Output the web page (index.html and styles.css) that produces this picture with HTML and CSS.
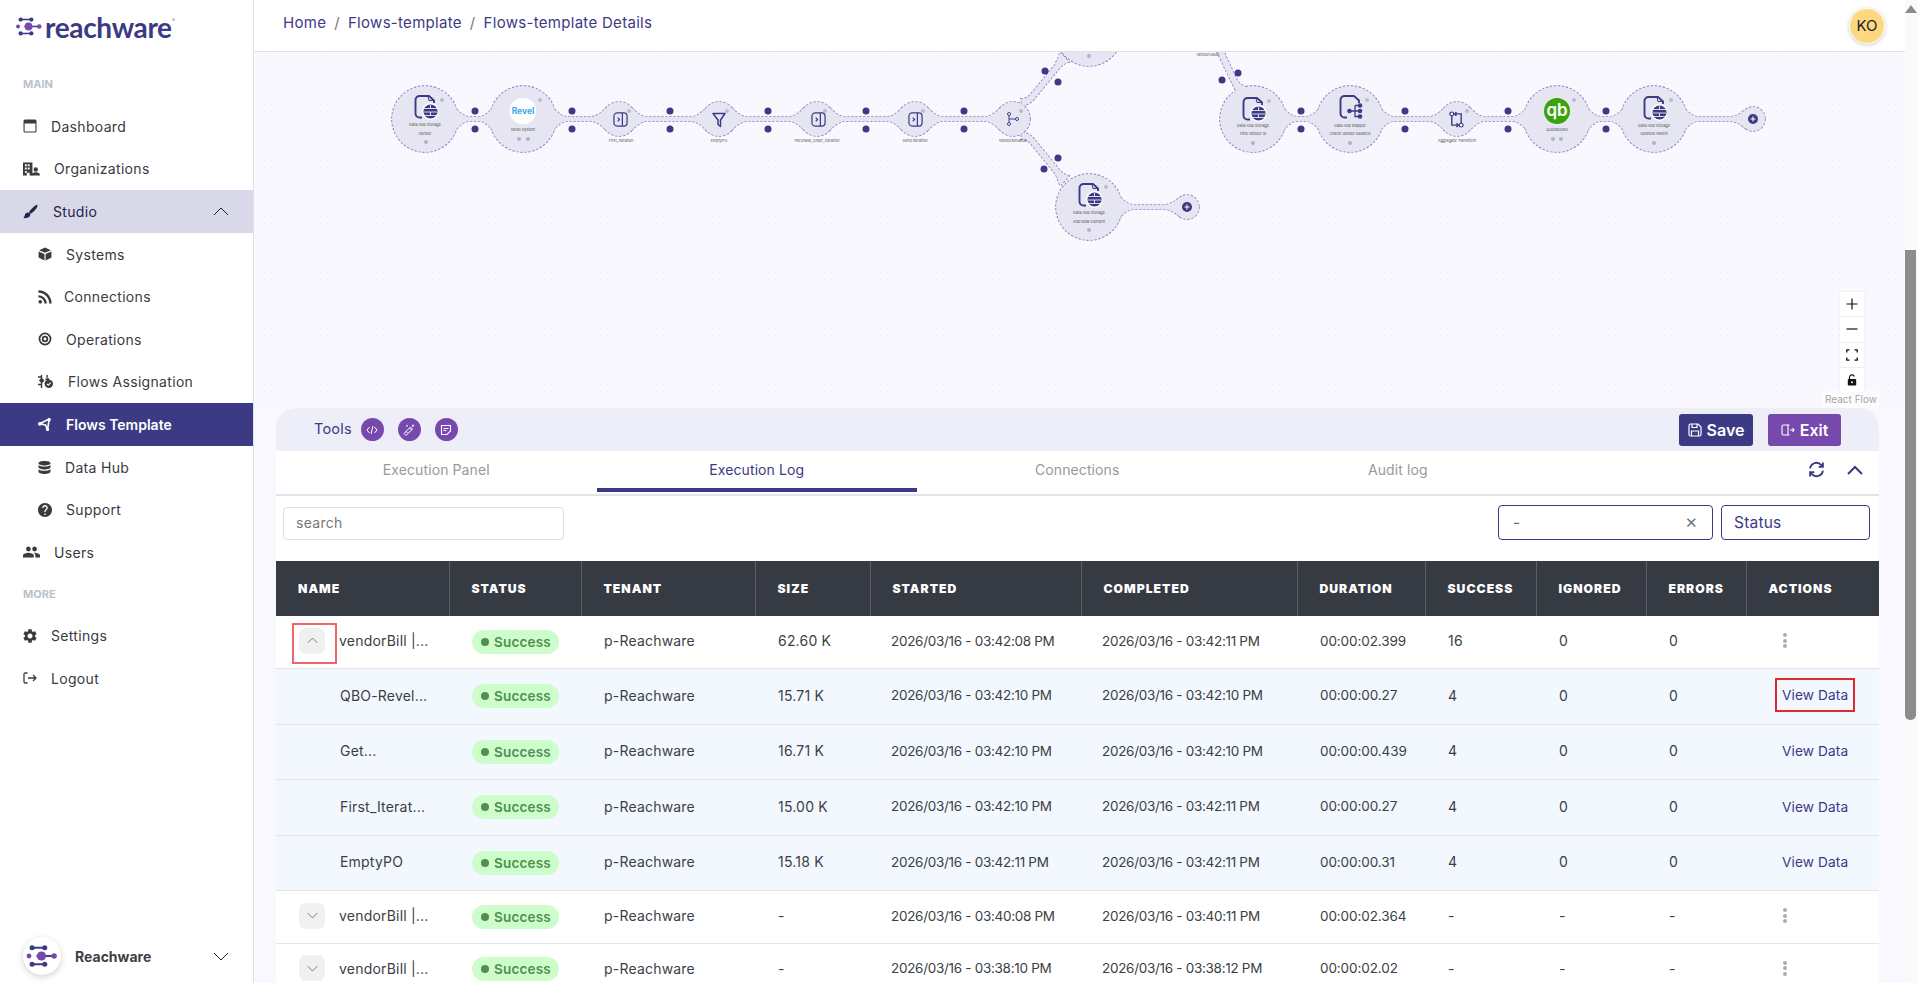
FILE: index.html
```html
<!DOCTYPE html>
<html lang="en">
<head>
<meta charset="utf-8">
<title>Flows-template Details</title>
<link rel="stylesheet" href="styles.css">
</head>
<body>
<svg class="defs" width="0" height="0" aria-hidden="true">
  <defs>
    <symbol id="i-dash" viewBox="0 0 14 14"><path d="M2 .5h10A1.5 1.5 0 0 1 13.500 2v10a1.500 1.500 0 0 1-1.500 1.500H2A1.500 1.500 0 0 1 .5 12V2A1.500 1.500 0 0 1 2 .5zM1.600 4.500V12c0 .2.2.4.4.4h10c.2 0 .4-.2.4-.4V4.500z" fill-rule="evenodd"/></symbol>
    <symbol id="i-org" viewBox="0 0 18 14"><path d="M0 0h10v14H7v-3H4v3H0zM2 2v2h2V2zm3 0v2h2V2zM2 5.500v2h2v-2zm3 0v2h2v-2zM2 9v2h2V9z" fill-rule="evenodd"/><circle cx="13.500" cy="7.500" r="2.300"/><path d="M9 14c0-2.500 2-3.500 4.500-3.500S18 11.500 18 14z"/></symbol>
    <symbol id="i-brush" viewBox="0 0 24 24"><path d="M8 13.500c-2.500 0-4.500 1.800-5 4.200C2.600 19.700 2 21 .5 22.500c3.500.5 8-.2 10-2.500 1.700-2 1.500-4.500.2-5.500zM23 1c-2 .3-5 2.200-9 6.500-2 2.100-3.500 3.900-4.500 5.200l2.800 2.800C16 13 19.600 9.500 21 7.500c1.500-2 2.500-5 2-6.500z"/></symbol>
    <symbol id="i-cube" viewBox="0 0 24 24"><path d="M12 1l10 4.500L12 10 2 5.500zM1 7.500l10 4.500v11L2.500 19 1 17.500zM23 7.500V18l-1.500 1L13 23V12z"/></symbol>
    <symbol id="i-rss" viewBox="3.500 4 16.500 16.500"><path d="M6.180 15.640a2.180 2.180 0 1 1 0 4.360 2.180 2.180 0 0 1 0-4.360zM4 4.440v2.830c7.030 0 12.730 5.700 12.730 12.730h2.830c0-8.590-6.970-15.560-15.560-15.560zm0 5.660v2.830c3.900 0 7.070 3.170 7.070 7.070h2.830c0-5.470-4.430-9.900-9.900-9.900z"/></symbol>
    <symbol id="i-target" viewBox="0 0 24 24"><path d="M12 1a11 11 0 1 0 0 22 11 11 0 0 0 0-22zm0 3a8 8 0 1 1 0 16 8 8 0 0 1 0-16zm0 2.500a5.500 5.500 0 1 0 0 11 5.500 5.500 0 0 0 0-11zm0 3a2.500 2.500 0 1 1 0 5 2.500 2.500 0 0 1 0-5z" fill-rule="evenodd"/></symbol>
    <symbol id="i-assign" viewBox="0 0 16 14"><path d="M3 0h1.500v3.500L7 6 4.500 8.500V14H3v-3H0V9.500h3V8L1 6l2-2.500V3H0V1.500h3zM9 0h1.500v3H9zM8 3.500h4v2H8z"/><circle cx="11.500" cy="9.500" r="4.500"/><path d="M9.500 9.500l1.500 1.500 2.500-2.800" fill="none" stroke="#fff" stroke-width="1.200"/></symbol>
    <symbol id="i-flow" viewBox="0 0 14 14"><path d="M1.800 6.200L12 1.200 10.300 12.500 8 7.500z" fill="none" stroke="currentColor" stroke-width="1.800"/><circle cx="2" cy="6.300" r="2"/><circle cx="12" cy="1.800" r="1.800"/><circle cx="10.300" cy="12.300" r="1.700"/></symbol>
    <symbol id="i-db" viewBox="0 0 12 13"><path d="M6 0c3.300 0 6 .9 6 2.200S9.300 4.400 6 4.400 0 3.500 0 2.200 2.700 0 6 0zM0 4c1.200 1 3.400 1.500 6 1.500S10.800 5 12 4v2.300c0 1.200-2.700 2.200-6 2.200S0 7.500 0 6.300zM0 8.200c1.200 1 3.400 1.500 6 1.500s4.800-.5 6-1.500v2.600C12 12 9.300 13 6 13s-6-1-6-2.200z"/></symbol>
    <symbol id="i-help" viewBox="2 2 20 20"><path d="M12 2C6.480 2 2 6.480 2 12s4.480 10 10 10 10-4.480 10-10S17.520 2 12 2zm1 17h-2v-2h2v2zm2.070-7.750l-.9.920C13.450 12.900 13 13.500 13 15h-2v-.5c0-1.100.45-2.100 1.170-2.830l1.240-1.260c.37-.36.59-.86.59-1.410 0-1.100-.9-2-2-2s-2 .9-2 2H8c0-2.210 1.790-4 4-4s4 1.790 4 4c0 .88-.36 1.680-.93 2.250z"/></symbol>
    <symbol id="i-users" viewBox="1 5 22 14"><path d="M16 11c1.660 0 2.990-1.340 2.990-3S17.660 5 16 5c-1.660 0-3 1.340-3 3s1.340 3 3 3zm-8 0c1.660 0 2.990-1.340 2.990-3S9.660 5 8 5C6.340 5 5 6.340 5 8s1.340 3 3 3zm0 2c-2.330 0-7 1.170-7 3.500V19h14v-2.500c0-2.330-4.670-3.500-7-3.500zm8 0c-.29 0-.62.020-.97.050 1.160.84 1.970 1.970 1.970 3.450V19h6v-2.500c0-2.330-4.670-3.500-7-3.500z"/></symbol>
    <symbol id="i-cog" viewBox="2.500 2 19 20"><path d="M19.140 12.940c.04-.3.060-.61.060-.94 0-.32-.02-.64-.07-.94l2.030-1.580c.18-.14.23-.41.12-.61l-1.920-3.320c-.12-.22-.37-.29-.59-.22l-2.390.96c-.5-.38-1.030-.7-1.620-.94l-.36-2.540c-.04-.24-.24-.41-.48-.41h-3.840c-.24 0-.43.17-.47.41l-.36 2.540c-.59.24-1.130.57-1.620.94l-2.390-.96c-.22-.08-.47 0-.59.22L2.740 8.870c-.12.21-.08.47.12.61l2.030 1.580c-.05.3-.09.63-.09.94s.02.64.07.94l-2.030 1.580c-.18.14-.23.41-.12.61l1.920 3.320c.12.22.37.29.59.22l2.390-.96c.5.38 1.030.7 1.620.94l.36 2.540c.05.24.24.41.48.41h3.840c.24 0 .44-.17.47-.41l.36-2.540c.59-.24 1.130-.56 1.620-.94l2.390.96c.22.08.47 0 .59-.22l1.920-3.320c.12-.22.07-.47-.12-.61l-2.010-1.580zM12 15.600c-1.980 0-3.600-1.620-3.600-3.600s1.620-3.600 3.600-3.600 3.600 1.620 3.600 3.600-1.620 3.600-3.600 3.600z"/></symbol>
    <symbol id="i-logout" viewBox="0 0 14 12"><path d="M4.500 1H2.200C1.500 1 1 1.500 1 2.200v7.600c0 .7.5 1.200 1.200 1.200h2.300M5 6h8M10 3l3 3-3 3" fill="none" stroke="currentColor" stroke-width="1.300"/></symbol>
    <symbol id="i-chev-up" viewBox="0 0 16 9"><path d="M1 8l7-7 7 7" fill="none" stroke="currentColor" stroke-width="1"/></symbol>
    <symbol id="i-chev-down" viewBox="0 0 16 9"><path d="M1 1l7 7 7-7" fill="none" stroke="currentColor" stroke-width="1"/></symbol>
    <symbol id="i-mark" viewBox="0 0 28 20">
      <path d="M5 2.500h12M5 17.500h12M9 10h14" stroke="#3d3a85" stroke-width="1.700" fill="none"/>
      <circle cx="5" cy="2.500" r="2.300" fill="#3d3a85"/><circle cx="16.500" cy="2.500" r="2.300" fill="#3d3a85"/>
      <circle cx="5" cy="17.500" r="2.300" fill="#3d3a85"/><circle cx="16.500" cy="17.500" r="2.300" fill="#3d3a85"/>
      <circle cx="2.200" cy="10" r="2.200" fill="#7849ad"/><circle cx="25" cy="10" r="2.500" fill="#7849ad"/>
      <circle cx="13.500" cy="10" r="4.200" fill="#7849ad"/>
    </symbol>
    <symbol id="n-store" viewBox="0 0 24 26">
      <path d="M8 22.500H5.500a4 4 0 0 1-4-4V5a4 4 0 0 1 4-4H15l5 4.500V8" fill="none" stroke="#3d3a85" stroke-width="1.900" stroke-linejoin="round"/>
      <path d="M14 1.500l1 4h5" fill="none" stroke="#3d3a85" stroke-width="1"/>
      <circle cx="16.500" cy="16.500" r="8.500" fill="#fff"/><circle cx="16.500" cy="16.500" r="7" fill="#3d3a85"/>
      <path d="M10 13.500h13M10 17h13M10 20.500h13M16.500 10v4M16.500 17v4" stroke="#fff" stroke-width=".8"/>
    </symbol>
    <symbol id="n-map" viewBox="0 0 24 26">
      <path d="M8 22.500H5.500a4 4 0 0 1-4-4V5a4 4 0 0 1 4-4H15l5 4.500V8" fill="none" stroke="#3d3a85" stroke-width="1.900" stroke-linejoin="round"/>
      <path d="M11 16h5M16 10.500v11h4M16 10.500h4M16 16h4" fill="none" stroke="#3d3a85" stroke-width="1.300"/>
      <circle cx="21" cy="10.500" r="2.300" fill="#3d3a85"/><circle cx="21" cy="16" r="2.300" fill="#3d3a85"/><circle cx="21" cy="21.500" r="2.300" fill="#3d3a85"/><circle cx="10.500" cy="16" r="2.300" fill="#3d3a85"/>
    </symbol>
    <symbol id="n-iter" viewBox="0 0 16 16">
      <rect x="1" y="1" width="14" height="14" rx="3.500" fill="none" stroke="#3d3a85" stroke-width="1.300"/>
      <path d="M10 1v14M5 6l2 2-2 2" fill="none" stroke="#3d3a85" stroke-width="1.300"/>
    </symbol>
    <symbol id="n-filter" viewBox="0 0 14 16"><path d="M1 1.500h12L8.500 8v6.500L6 12.500V8z" fill="none" stroke="#3d3a85" stroke-width="1.500" stroke-linejoin="round"/></symbol>
    <symbol id="n-branch" viewBox="0 0 14 14"><path d="M3 3v8M3 7h6.500M3 7" fill="none" stroke="#3d3a85" stroke-width="1"/><circle cx="3" cy="2" r="1.500" fill="#fff" stroke="#3d3a85"/><circle cx="3" cy="12" r="1.500" fill="#fff" stroke="#3d3a85"/><circle cx="11" cy="7" r="1.500" fill="#fff" stroke="#3d3a85"/></symbol>
    <symbol id="n-agg" viewBox="0 0 16 18"><path d="M3 5v10h7M13 13V3H6M8 1L6 3l2 2M8 13l2 2-2 2" fill="none" stroke="#3d3a85" stroke-width="1.500"/><circle cx="3" cy="3" r="2" fill="#fff" stroke="#3d3a85" stroke-width="1.300"/><circle cx="13" cy="15" r="2" fill="#fff" stroke="#3d3a85" stroke-width="1.300"/></symbol>
    <symbol id="n-plus" viewBox="0 0 14 14"><circle cx="7" cy="7" r="7" fill="#3d3a85"/><path d="M3.500 7h7M7 3.500v7" stroke="#fff" stroke-width="1.500"/></symbol>
    <g id="blobs">
      <circle cx="1089" cy="33" r="33"/>
      <circle cx="425" cy="119" r="33"/><circle cx="523" cy="119" r="33"/><circle cx="619" cy="119" r="17"/>
      <circle cx="719" cy="119" r="17"/><circle cx="817" cy="119" r="17"/><circle cx="915" cy="119" r="17"/>
      <circle cx="1013" cy="119" r="17"/><circle cx="1089" cy="207" r="33"/><circle cx="1187" cy="207" r="12"/>
      <circle cx="1253" cy="119" r="33"/><circle cx="1350" cy="119" r="33"/><circle cx="1457" cy="119" r="17"/>
      <circle cx="1557" cy="119" r="33"/><circle cx="1654" cy="119" r="33"/><circle cx="1753" cy="119" r="12"/>
      <path d="M454 106Q462 117 470 117L478 117Q486 117 494 106V132Q486 121 478 121L470 121Q462 121 454 132Z"/>
      <path d="M552 106Q560 117 568 117L590 117Q598 117 606 108V130Q598 121 590 121L568 121Q560 121 552 132Z"/>
      <path d="M632 108Q640 117 648 117L690 117Q698 117 706 108V130Q698 121 690 121L648 121Q640 121 632 130Z"/>
      <path d="M732 108Q740 117 748 117L788 117Q796 117 804 108V130Q796 121 788 121L748 121Q740 121 732 130Z"/>
      <path d="M830 108Q838 117 846 117L886 117Q894 117 902 108V130Q894 121 886 121L846 121Q838 121 830 130Z"/>
      <path d="M928 108Q936 117 944 117L984 117Q992 117 1000 108V130Q992 121 984 121L944 121Q936 121 928 130Z"/>
      <path d="M1282 106Q1290 117 1298 117L1305 117Q1313 117 1321 106V132Q1313 121 1305 121L1298 121Q1290 121 1282 132Z"/>
      <path d="M1379 106Q1387 117 1395 117L1428 117Q1436 117 1444 108V130Q1436 121 1428 121L1395 121Q1387 121 1379 132Z"/>
      <path d="M1470 108Q1478 117 1486 117L1512 117Q1520 117 1528 106V132Q1520 121 1512 121L1486 121Q1478 121 1470 130Z"/>
      <path d="M1586 106Q1594 117 1602 117L1609 117Q1617 117 1625 106V132Q1617 121 1609 121L1602 121Q1594 121 1586 132Z"/>
      <path d="M1683 106Q1691 117 1699 117L1729 117Q1737 117 1745 110V128Q1737 121 1729 121L1699 121Q1691 121 1683 132Z"/>
      <path d="M1118 194Q1126 205 1134 205L1163 205Q1171 205 1179 198V216Q1171 209 1163 209L1134 209Q1126 209 1118 220Z"/>
      <path d="M1022 132Q1031 134 1035 140L1058 168Q1062 174 1069 176L1060 186Q1058 178 1054 172L1031 144Q1027 139 1021 139Z"/>
      <path d="M1022 106Q1031 104 1035 98L1058 70Q1062 64 1069 62L1060 52Q1058 60 1054 66L1031 94Q1027 99 1021 99Z"/>
      <path d="M1217 52H1224L1237 80Q1240 85 1246 87L1237 98Q1237 91 1233 85Z"/>
    </g>
  </defs>
</svg>

<div class="app">
  <aside class="sidebar">
    <div class="logo"><svg class="logo-mark"><use href="#i-mark"/></svg><span class="logo-text">reachware</span><span class="logo-reg">®</span></div>
    <div class="nav-label">MAIN</div>
    <nav class="nav">
      <a class="item"><svg class="ic ic-14 g14"><use href="#i-dash"/></svg>Dashboard</a>
      <a class="item"><svg class="ic ic-17 g14"><use href="#i-org"/></svg>Organizations</a>
      <a class="item item-open"><svg class="ic ic-15 g15"><use href="#i-brush"/></svg>Studio<svg class="caret"><use href="#i-chev-up"/></svg></a>
      <a class="item sub"><svg class="ic ic-14 g14"><use href="#i-cube"/></svg>Systems</a>
      <a class="item sub"><svg class="ic ic-14 g12"><use href="#i-rss"/></svg>Connections</a>
      <a class="item sub"><svg class="ic ic-14 g14"><use href="#i-target"/></svg>Operations</a>
      <a class="item sub"><svg class="ic ic-15 g15"><use href="#i-assign"/></svg>Flows Assignation</a>
      <a class="item sub item-active"><svg class="ic ic-13 g15"><use href="#i-flow"/></svg>Flows Template</a>
      <a class="item sub"><svg class="ic ic-13 g14"><use href="#i-db"/></svg>Data Hub</a>
      <a class="item sub"><svg class="ic ic-14 g14"><use href="#i-help"/></svg>Support</a>
      <a class="item"><svg class="ic ic-17 g14"><use href="#i-users"/></svg>Users</a>
    </nav>
    <div class="nav-label nav-label-more">MORE</div>
    <nav class="nav">
      <a class="item"><svg class="ic ic-14 g14"><use href="#i-cog"/></svg>Settings</a>
      <a class="item"><svg class="ic ic-14 g14"><use href="#i-logout"/></svg>Logout</a>
    </nav>
    <div class="org">
      <span class="org-avatar"><svg class="org-mark"><use href="#i-mark"/></svg></span>
      <span class="org-name">Reachware</span>
      <svg class="caret"><use href="#i-chev-down"/></svg>
    </div>
  </aside>

  <main class="main">
    <header class="topbar">
      <div class="crumbs"><span>Home</span><span class="sep">/</span><span>Flows-template</span><span class="sep">/</span><span>Flows-template Details</span></div>
      <div class="avatar">KO</div>
    </header>

    <section class="canvas">
      <svg class="flow" viewBox="254 52 1651 356" width="1651" height="356">
        <use href="#blobs" class="blob-line"/>
        <use href="#blobs" class="blob-fill"/>

        <g class="handles">
          <circle cx="475" cy="111" r="3.500"/><circle cx="475" cy="129" r="3.500"/>
          <circle cx="572" cy="111" r="3.500"/><circle cx="572" cy="129" r="3.500"/>
          <circle cx="670" cy="111" r="3.500"/><circle cx="670" cy="129" r="3.500"/>
          <circle cx="768" cy="111" r="3.500"/><circle cx="768" cy="129" r="3.500"/>
          <circle cx="866" cy="111" r="3.500"/><circle cx="866" cy="129" r="3.500"/>
          <circle cx="964" cy="111" r="3.500"/><circle cx="964" cy="129" r="3.500"/>
          <circle cx="1301" cy="111" r="3.500"/><circle cx="1301" cy="129" r="3.500"/>
          <circle cx="1405" cy="111" r="3.500"/><circle cx="1405" cy="129" r="3.500"/>
          <circle cx="1508" cy="111" r="3.500"/><circle cx="1508" cy="129" r="3.500"/>
          <circle cx="1606" cy="111" r="3.500"/><circle cx="1606" cy="129" r="3.500"/>
          <circle cx="1045" cy="71" r="3.500"/><circle cx="1058" cy="82" r="3.500"/>
          <circle cx="1058" cy="158" r="3.500"/><circle cx="1044" cy="169" r="3.500"/>
          <circle cx="1238" cy="73" r="3.500"/><circle cx="1222" cy="80" r="3.500"/>
        </g>

        <g class="badges">
          <circle cx="442" cy="100" r="2"/><circle cx="540" cy="100" r="2"/><circle cx="629" cy="111" r="2"/>
          <circle cx="727" cy="111" r="2"/><circle cx="825" cy="111" r="2"/><circle cx="923" cy="111" r="2"/>
          <circle cx="1021" cy="111" r="2"/><circle cx="1106" cy="187" r="2"/><circle cx="1269" cy="101" r="2"/>
          <circle cx="1367" cy="100" r="2"/><circle cx="1467" cy="111" r="2"/><circle cx="1574" cy="100" r="2"/>
          <circle cx="1671" cy="100" r="2"/>
        </g>
        <g class="mini">
          <circle cx="426" cy="142" r="2"/><circle cx="519" cy="139" r="2"/><circle cx="528" cy="139" r="2"/>
          <circle cx="1089" cy="230" r="2"/><circle cx="1089" cy="56" r="2"/><circle cx="1253" cy="143" r="2"/>
          <circle cx="1350" cy="143" r="2"/><circle cx="1553" cy="139" r="2"/><circle cx="1561" cy="139" r="2"/>
          <circle cx="1654" cy="143" r="2"/>
        </g>

        <use href="#n-store" x="414" y="95" width="24" height="26"/>
        <circle cx="523" cy="111" r="13.300" class="white"/>
        <text x="523" y="114" class="revel">Revel</text>
        <use href="#n-iter" x="613" y="112" width="15" height="15"/>
        <use href="#n-filter" x="712" y="112" width="14" height="16"/>
        <use href="#n-iter" x="811" y="112" width="15" height="15"/>
        <use href="#n-iter" x="908" y="112" width="15" height="15"/>
        <use href="#n-branch" x="1006" y="112" width="14" height="14"/>
        <use href="#n-store" x="1078" y="183" width="24" height="26"/>
        <use href="#n-plus" x="1182" y="202" width="10" height="10"/>
        <use href="#n-store" x="1242" y="97" width="24" height="26"/>
        <use href="#n-map" x="1339" y="95" width="24" height="26"/>
        <use href="#n-agg" x="1449" y="111" width="15" height="17"/>
        <circle cx="1557" cy="111" r="13" class="qb"/>
        <text x="1557" y="116" class="qb-text">qb</text>
        <use href="#n-store" x="1643" y="96" width="24" height="26"/>
        <use href="#n-plus" x="1748" y="114" width="10" height="10"/>

        <g class="labels">
          <text x="425" y="126">Data Hub Storage</text><text x="425" y="135">Vendor</text>
          <text x="523" y="131">Revel System</text>
          <text x="621" y="142">First_Iteration</text>
          <text x="719" y="142">EmptyPO</text>
          <text x="817" y="142">Purchase_Order_Iteration</text>
          <text x="915" y="142">Send Iteration</text>
          <text x="1013" y="142">vendorBillValue</text>
          <text x="1089" y="214">Data Hub Storage</text><text x="1089" y="223">Add New Element</text>
          <text x="1253" y="127">Data Hub Storage</text><text x="1253" y="135">Find Vendor Id</text>
          <text x="1350" y="127">Data Hub Mapper</text><text x="1350" y="135">Check Vendor Balance</text>
          <text x="1457" y="142">Aggregate Transform</text>
          <text x="1557" y="131">QuickBooks</text>
          <text x="1654" y="127">Data Hub Storage</text><text x="1654" y="135">Address Parent</text>
          <text x="1208" y="56">vendorValue</text>
        </g>
      </svg>

      <div class="controls">
        <button class="ctl"><svg viewBox="0 0 12 12"><path d="M6 .5v11M.5 6h11" stroke="#111" stroke-width="1.200"/></svg></button>
        <button class="ctl"><svg viewBox="0 0 12 12"><path d="M.5 6h11" stroke="#111" stroke-width="1.200"/></svg></button>
        <button class="ctl"><svg viewBox="0 0 12 12"><path d="M.8 3.500V.8h2.700M8.500.8h2.700v2.700M11.200 8.500v2.700H8.500M3.500 11.200H.8V8.500" fill="none" stroke="#111" stroke-width="1.300"/></svg></button>
        <button class="ctl"><svg viewBox="0 0 12 12"><path d="M3.500 5V3.200a2.500 2.500 0 0 1 4.800-.8" fill="none" stroke="#111" stroke-width="1.200"/><rect x="1.800" y="5" width="8.400" height="6.500" rx=".8" fill="#111"/><circle cx="6" cy="8.200" r="1" fill="#fff"/></svg></button>
      </div>
      <div class="attribution">React Flow</div>
    </section>

    <section class="panel">
      <div class="tools">
        <span class="tools-label">Tools</span>
        <span class="tool"><svg viewBox="0 0 12 12"><path d="M3.500 3L1 6l2.500 3M8.500 3L11 6 8.500 9M7 2L5 10" fill="none" stroke="#fff" stroke-width="1"/></svg></span>
        <span class="tool"><svg viewBox="0 0 12 12"><path d="M1 9.500L7.500 3 9.500 5 3 11.500zM6.500 4l2 2M3 7.500l1.500 1.500" fill="none" stroke="#fff" stroke-width="1"/><path d="M10 .5v2.500M8.800 1.700h2.500M4 1v1.600M3.200 1.800h1.600" stroke="#fff" stroke-width=".8"/></svg></span>
        <span class="tool"><svg viewBox="0 0 12 12"><path d="M1.500 1.500h9V7L7 10.500H1.500zM3.500 4.500h5M3.500 6.500h3" fill="none" stroke="#fff" stroke-width="1.100"/></svg></span>
        <span class="spacer"></span>
        <button class="btn btn-save"><svg viewBox="0 0 14 14"><path d="M2.500 1h7.500L13 4v7.500a1.500 1.500 0 0 1-1.500 1.500h-9A1.500 1.500 0 0 1 1 11.500v-9A1.500 1.500 0 0 1 2.500 1zM4 1v3.500h5V1M3.500 13V8h7v5" fill="none" stroke="#fff" stroke-width="1.200"/></svg>Save</button>
        <button class="btn btn-exit"><svg viewBox="0 0 14 14"><path d="M7 2H2.500A1.500 1.500 0 0 0 1 3.500v7A1.500 1.500 0 0 0 2.500 12H7zM7 2h1.500M7 12h1.500M9 7h4M11.500 5L13 7l-1.500 2" fill="none" stroke="#fff" stroke-width="1.100"/></svg>Exit</button>
      </div>

      <div class="tabs">
        <span class="tab">Execution Panel</span>
        <span class="tab tab-active">Execution Log</span>
        <span class="tab">Connections</span>
        <span class="tab">Audit log</span>
        <span class="tab-tools">
          <svg class="refresh" viewBox="0 0 16 16"><path d="M2 7a6 6 0 0 1 10.500-3.200L14 5.500M14 1.500v4h-4M14 9a6 6 0 0 1-10.500 3.200L2 10.500M2 14.500v-4h4" fill="none" stroke="#3d3a85" stroke-width="1.800"/></svg>
          <svg class="tab-chev" viewBox="0 0 16 10"><path d="M1 9l7-7 7 7" fill="none" stroke="#3d3a85" stroke-width="2"/></svg>
        </span>
      </div>

      <div class="filters">
        <div class="search">search</div>
        <span class="spacer"></span>
        <div class="select select-date"><span>-</span><span class="clear">✕</span></div>
        <div class="select select-status">Status</div>
      </div>

      <table class="grid">
        <colgroup>
          <col class="c1"><col class="c2"><col class="c3"><col class="c4"><col class="c5"><col class="c6"><col class="c7"><col class="c8"><col class="c9"><col class="c10"><col class="c11">
        </colgroup>
        <thead>
          <tr><th>NAME</th><th>STATUS</th><th>TENANT</th><th>SIZE</th><th>STARTED</th><th>COMPLETED</th><th>DURATION</th><th>SUCCESS</th><th>IGNORED</th><th>ERRORS</th><th>ACTIONS</th></tr>
        </thead>
        <tbody>
          <tr class="r52">
            <td><span class="name-wrap"><span class="expander hl"><svg><use href="#i-chev-up"/></svg></span>vendorBill |...</span></td>
            <td><span class="pill"><i></i>Success</span></td><td>p-Reachware</td><td>62.60 K</td><td class="dt">2026/03/16 - 03:42:08 PM</td><td class="dt">2026/03/16 - 03:42:11 PM</td><td class="dur">00:00:02.399</td><td>16</td><td>0</td><td>0</td><td><span class="kebab"><i></i><i></i><i></i></span></td>
          </tr>
          <tr class="child r56">
            <td class="child-name">QBO-Revel...</td>
            <td><span class="pill"><i></i>Success</span></td><td>p-Reachware</td><td>15.71 K</td><td class="dt">2026/03/16 - 03:42:10 PM</td><td class="dt">2026/03/16 - 03:42:10 PM</td><td class="dur">00:00:00.27</td><td>4</td><td>0</td><td>0</td><td><a class="view view-hl">View Data</a></td>
          </tr>
          <tr class="child r55">
            <td class="child-name">Get...</td>
            <td><span class="pill"><i></i>Success</span></td><td>p-Reachware</td><td>16.71 K</td><td class="dt">2026/03/16 - 03:42:10 PM</td><td class="dt">2026/03/16 - 03:42:10 PM</td><td class="dur">00:00:00.439</td><td>4</td><td>0</td><td>0</td><td><a class="view">View Data</a></td>
          </tr>
          <tr class="child r56">
            <td class="child-name">First_Iterat...</td>
            <td><span class="pill"><i></i>Success</span></td><td>p-Reachware</td><td>15.00 K</td><td class="dt">2026/03/16 - 03:42:10 PM</td><td class="dt">2026/03/16 - 03:42:11 PM</td><td class="dur">00:00:00.27</td><td>4</td><td>0</td><td>0</td><td><a class="view">View Data</a></td>
          </tr>
          <tr class="child r55">
            <td class="child-name">EmptyPO</td>
            <td><span class="pill"><i></i>Success</span></td><td>p-Reachware</td><td>15.18 K</td><td class="dt">2026/03/16 - 03:42:11 PM</td><td class="dt">2026/03/16 - 03:42:11 PM</td><td class="dur">00:00:00.31</td><td>4</td><td>0</td><td>0</td><td><a class="view">View Data</a></td>
          </tr>
          <tr class="r53">
            <td><span class="name-wrap"><span class="expander"><svg><use href="#i-chev-down"/></svg></span>vendorBill |...</span></td>
            <td><span class="pill"><i></i>Success</span></td><td>p-Reachware</td><td>-</td><td class="dt">2026/03/16 - 03:40:08 PM</td><td class="dt">2026/03/16 - 03:40:11 PM</td><td class="dur">00:00:02.364</td><td>-</td><td>-</td><td>-</td><td><span class="kebab"><i></i><i></i><i></i></span></td>
          </tr>
          <tr class="r52">
            <td><span class="name-wrap"><span class="expander"><svg><use href="#i-chev-down"/></svg></span>vendorBill |...</span></td>
            <td><span class="pill"><i></i>Success</span></td><td>p-Reachware</td><td>-</td><td class="dt">2026/03/16 - 03:38:10 PM</td><td class="dt">2026/03/16 - 03:38:12 PM</td><td class="dur">00:00:02.02</td><td>-</td><td>-</td><td>-</td><td><span class="kebab"><i></i><i></i><i></i></span></td>
          </tr>
        </tbody>
      </table>
    </section>
  </main>

  <div class="scrollbar"><span class="sb-arrow"></span><span class="sb-thumb"></span></div>
</div>
</body>
</html>
```
FILE: styles.css
```css
* { box-sizing: border-box; }
html, body { margin: 0; height: 100%; overflow: hidden; }
body { font-family: Inter, "Noto Sans", sans-serif; font-size: 14px; color: #343a40; background: #f8f8fe; }
.defs { position: absolute; }
.app { display: flex; height: 983px; width: 1918px; overflow: hidden; }

/* sidebar */
.sidebar { width: 254px; flex: none; height: 983px; background: #fff; border-right: 1px solid #dfdfe8; display: flex; flex-direction: column; }
.logo { height: 69px; padding: 16px 0 0 16px; display: flex; align-items: flex-start; color: #3d3a85; }
.logo-mark { width: 26px; height: 19px; margin-top: 1px; }
.logo-text { font-family: Lato, sans-serif; font-weight: 700; font-size: 28px; line-height: 22px; margin-left: 3px; letter-spacing: -.35px; }
.logo-reg { font-size: 5px; line-height: 8px; color: #8d8bb8; }
.nav-label { height: 30px; line-height: 30px; padding-left: 23px; font-size: 11px; font-weight: 700; color: #b9c2ce; margin-bottom: 6px; }
.nav-label-more { margin-top: 5px; }
.item { display: flex; align-items: center; height: 42.6px; padding-left: 23px; padding-right: 24px; color: #3a3a3f; font-size: 14px; letter-spacing: .32px; }
.item.sub { padding-left: 38px; }
.item-open { background: #d8d8e8; color: #24224f; }
.item-active { background: #3d3a85; color: #fff; font-weight: 600; letter-spacing: 0; }
.ic { fill: currentColor; flex: none; }
.ic-13 { width: 13px; height: 13px; }
.ic-14 { width: 14px; height: 14px; }
.ic-15 { width: 15px; height: 15px; }
.ic-17 { width: 17px; height: 14px; }
.g12 { margin-right: 12px; }
.g14 { margin-right: 14px; }
.g15 { margin-right: 15px; }
.caret { width: 16px; height: 9px; margin-left: auto; color: #222; flex: none; }
.org { margin-top: auto; height: 54px; display: flex; align-items: center; padding: 0 24px 0 23px; }
.org-avatar { width: 38px; height: 38px; border-radius: 50%; background: #fff; box-shadow: 0 2px 6px rgba(0,0,0,.18); display: flex; align-items: center; justify-content: center; flex: none; }
.org-mark { width: 32px; height: 22px; }
.org-name { margin-left: 14px; font-weight: 700; font-size: 14px; color: #3c3f46; }

/* main */
.main { width: 1651px; flex: none; display: flex; flex-direction: column; background: #f8f8fe; }
.topbar { height: 52px; flex: none; background: #fff; border-bottom: 1px solid #e1e1ea; display: flex; align-items: center; justify-content: space-between; padding: 0 20px 6px 29px; }
.crumbs { display: flex; gap: 8px; color: #3d3a85; font-size: 15px; letter-spacing: .3px; }
.sep { color: #777; }
.avatar { width: 36px; height: 36px; margin-top: 6px; border-radius: 50%; background: #fcd980; border: 1px solid #fff; box-shadow: 0 1px 4px rgba(0,0,0,.2); display: flex; align-items: center; justify-content: center; color: #222; font-size: 15px; }

/* canvas */
.canvas { height: 356px; flex: none; position: relative; overflow: hidden; background-color: #f8f8fe; background-image: radial-gradient(#eeeef7 0.7px, transparent 0.8px); background-size: 7px 7px; }
.flow { display: block; }
.blob-line { fill: none; stroke: #8f78c4; stroke-width: 1.600; stroke-dasharray: 2.500 1.500; }
.blob-fill { fill: #e6e5f2; stroke: none; }
.handles { fill: #3d3a85; }
.badges { fill: #bdbccb; }
.mini { fill: #b3aed6; }
.white { fill: #fff; }
.revel { font-size: 8.500px; font-weight: 700; fill: #3aa7e6; text-anchor: middle; }
.qb { fill: #3aa30c; }
.qb-text { font-size: 17px; font-weight: 600; fill: #fff; text-anchor: middle; }
.labels text { font-size: 3.800px; fill: #555; text-anchor: middle; }
.controls { position: absolute; left: 1586px; top: 240px; width: 24px; display: flex; flex-direction: column; box-shadow: 0 0 2px rgba(0,0,0,.08); }
.ctl { width: 24px; height: 25.300px; padding: 6px; background: #fff; border: 0; border-bottom: 1px solid #eee; display: flex; align-items: center; justify-content: center; }
.ctl svg { width: 12px; height: 12px; display: block; }
.attribution { position: absolute; left: 1569px; top: 339px; height: 17px; width: 56px; background: rgba(255,255,255,.6); font-size: 10px; line-height: 17px; color: #a5a5a5; text-align: center; }

/* panel */
.panel { width: 1603px; margin-left: 22px; flex: none; }
.tools { height: 43px; background: #eeeef8; border-radius: 20px 20px 0 0; display: flex; align-items: center; padding: 0 38px 0 38px; }
.tools-label { color: #3d3a85; font-size: 14.500px; margin-right: 9px; letter-spacing: .2px; padding-bottom: 2px; }
.tool { width: 23px; height: 23px; border-radius: 50%; background: #7849ad; margin-right: 14px; display: flex; align-items: center; justify-content: center; flex: none; }
.tool svg { width: 12px; height: 12px; }
.spacer { flex: 1; }
.btn { height: 32px; border: 0; border-radius: 3px; color: #fff; font-family: Inter, sans-serif; font-weight: 600; font-size: 16px; display: flex; align-items: center; justify-content: center; gap: 5px; padding: 0; }
.btn svg { width: 14px; height: 14px; }
.btn-save { width: 74px; background: #3d3a85; margin-right: 15px; }
.btn-exit { width: 73px; background: #7849ad; }
.tabs { height: 45px; background: #fff; border-bottom: 2px solid #e3e3ea; display: flex; position: relative; }
.tab { width: 320.500px; flex: none; text-align: center; line-height: 37px; height: 41px; color: #999; font-size: 14px; letter-spacing: .1px; }
.tab-active { color: #3d3a85; border-bottom: 4px solid #3d3a85; }
.tab-tools { position: absolute; right: 16px; top: 10px; display: flex; align-items: center; gap: 22px; }
.refresh { width: 17px; height: 17px; }
.tab-chev { width: 16px; height: 10px; }
.filters { height: 65px; background: #fff; display: flex; align-items: flex-start; padding: 9px 9px 0 7px; }
.search { width: 281px; height: 33px; margin-top: 2px; border: 1px solid #e0e0e4; border-radius: 4px; padding-left: 12px; line-height: 29px; color: #777; font-size: 14px; letter-spacing: .3px; }
.select { height: 35px; border: 1.500px solid #3d3a85; border-radius: 4px; display: flex; align-items: center; color: #3d3a85; font-size: 15.500px; letter-spacing: .2px; }
.select-date { width: 215px; padding: 0 14px; justify-content: space-between; color: #666; }
.clear { color: #6c757d; font-size: 15px; }
.select-status { width: 149px; margin-left: 8px; padding-left: 12px; }

/* table */
.grid { width: 1603px; table-layout: fixed; border-collapse: collapse; background: #fff; }
.c1 { width: 173px; } .c2 { width: 132px; } .c3 { width: 174px; } .c4 { width: 115px; } .c5 { width: 211px; } .c6 { width: 216px; } .c7 { width: 128px; } .c8 { width: 111px; } .c9 { width: 110px; } .c10 { width: 100px; } .c11 { width: 133px; }
.grid th { height: 55px; background: #363a43; color: #fff; text-align: left; padding: 0 0 0 22px; font-size: 12.200px; font-weight: 900; letter-spacing: 1px; border-left: 1px solid #5c5f66; }
.grid th:first-child { border-left: 0; }
.grid td { padding: 0 0 2px 23px; border-bottom: 1px solid #e2e6ea; font-size: 14px; color: #3a3f45; white-space: nowrap; overflow: visible; letter-spacing: .2px; }
.r52 td { height: 52px; } .r53 td { height: 53px; } .r55 td { height: 55px; } .r56 td { height: 56px; }
.child td { background: #f2f8fe; }
.grid td.child-name { padding-left: 64px; }
.grid td.dt { font-size: 13.500px; letter-spacing: -.3px; padding-left: 21px; }
.grid td.dur { font-size: 13.500px; letter-spacing: -.1px; }
.name-wrap { display: flex; align-items: center; gap: 14px; position: relative; }
.expander { width: 26px; height: 26px; border-radius: 7px; background: #f0f0f0; display: flex; align-items: center; justify-content: center; color: #444; flex: none; position: relative; }
.expander svg { width: 11px; height: 7px; }
.hl::after { content: ""; position: absolute; left: -7px; top: -5px; width: 41px; height: 37px; border: 2px solid #ee6669; }
.pill { display: inline-flex; align-items: center; width: 87px; height: 24px; margin-top: 2px; border-radius: 12px; background: #cdfdcb; color: #4f8f4f; font-weight: 600; font-size: 13.500px; padding-left: 9px; gap: 5px; letter-spacing: .2px; }
.pill i { width: 8px; height: 8px; border-radius: 50%; background: #4f8f4f; flex: none; }
.kebab { display: flex; flex-direction: column; gap: 1.500px; margin-left: 14px; }
.kebab i { width: 4px; height: 4px; border-radius: 50%; background: #a9adb3; }
.view { color: #3d3a85; font-size: 13.700px; margin-left: 13px; position: relative; display: inline-block; letter-spacing: .1px; }
.view-hl { outline: 2px solid #e0282e; padding: 7px 5px; margin-left: 8px; }

/* scrollbar */
.scrollbar { width: 13px; flex: none; background: #fafafa; position: relative; }
.sb-arrow { position: absolute; left: 0; top: 5px; border-left: 6px solid transparent; border-right: 6px solid transparent; border-bottom: 8px solid #8c8c8c; }
.sb-thumb { position: absolute; left: 0; top: 250px; width: 11px; height: 470px; background: #8c8c8c; border-radius: 0 0 5px 5px; }
```
